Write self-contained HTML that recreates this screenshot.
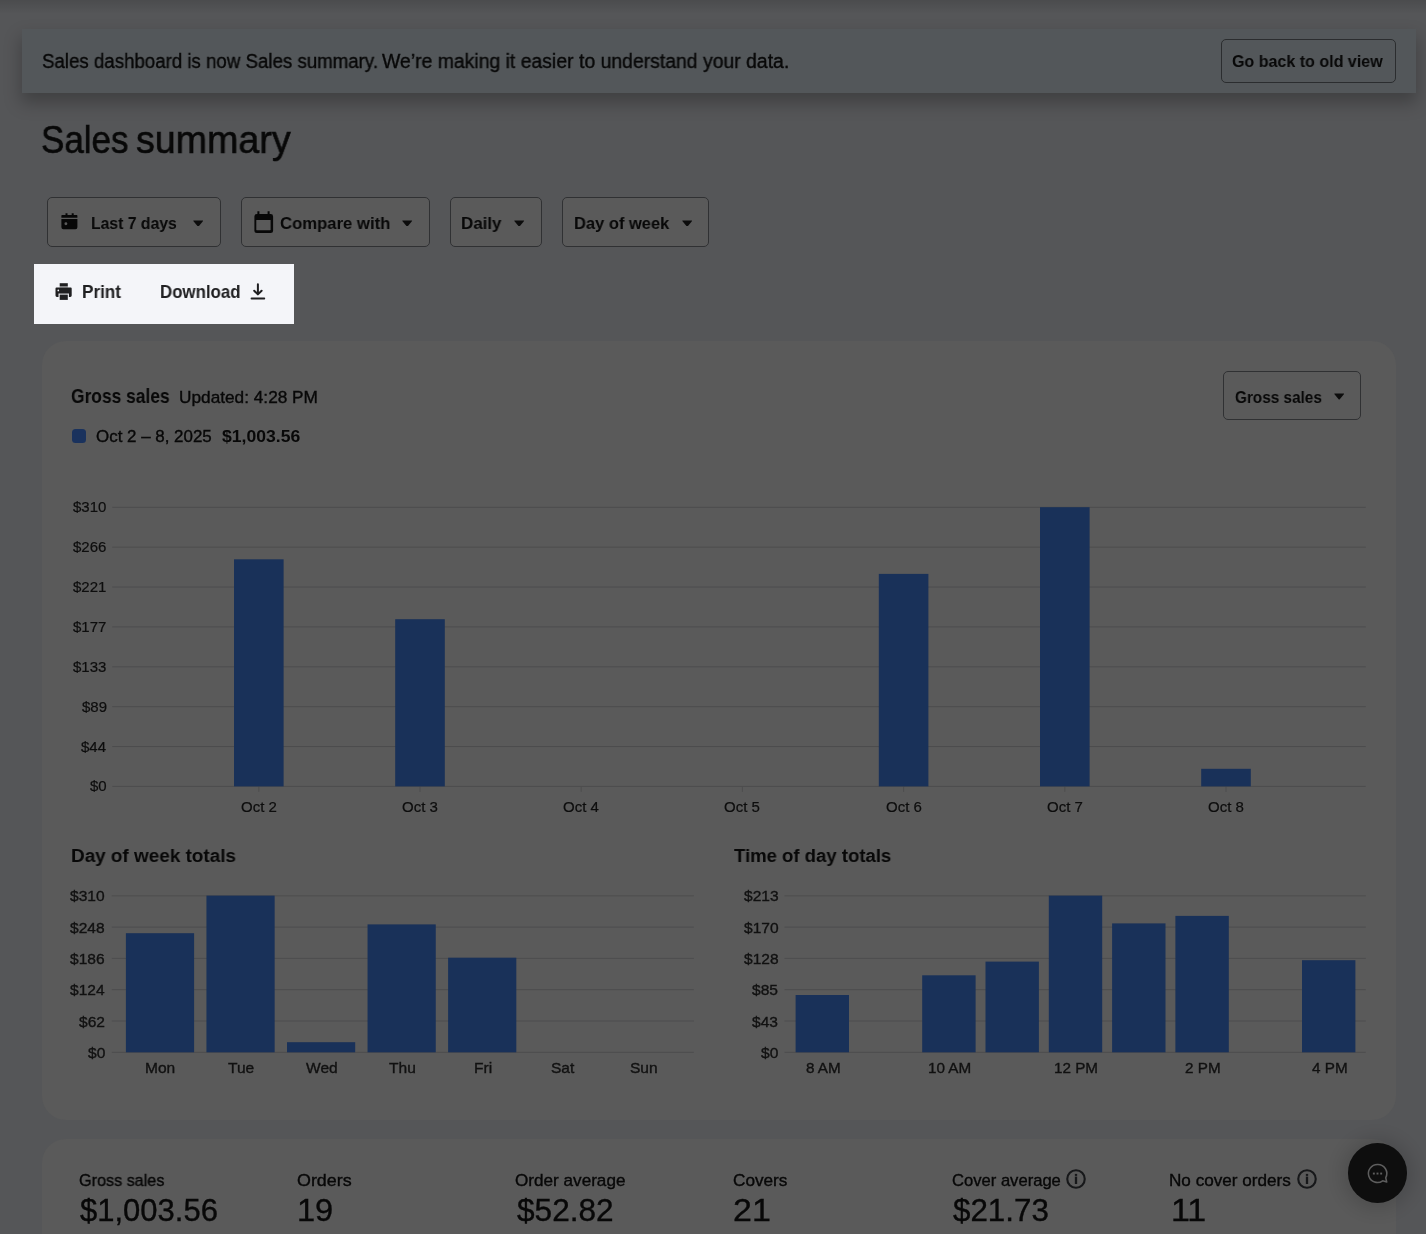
<!DOCTYPE html>
<html lang="en"><head><meta charset="utf-8"><title>Sales summary</title>
<style>
html,body{margin:0;padding:0}
body{width:1426px;height:1234px;position:relative;overflow:hidden;background:#555658;font-family:"Liberation Sans",Arial,sans-serif;color:#080808}
body>div,body>span,body>svg{position:absolute;display:block}
.t{white-space:nowrap;transform-origin:0 0;will-change:transform}
</style></head><body>
<div style="left:0;top:0;width:1426px;height:14px;background:linear-gradient(rgba(0,0,0,.12),rgba(0,0,0,0))"></div>
<div style="left:22px;top:28.5px;width:1394px;height:64.5px;background:#53575a;box-shadow:0 9px 16px 1px rgba(0,0,0,.25)"></div>
<span class="t " style="left:41.55px;top:51.93px;font-size:19.51px;line-height:19.51px;transform:scaleX(0.9578);-webkit-text-stroke:0.35px;">Sales dashboard is now Sales summary.</span>
<span class="t " style="left:381.91px;top:51.93px;font-size:19.51px;line-height:19.51px;transform:scaleX(0.9948);-webkit-text-stroke:0.35px;">We’re making it easier to understand your data.</span>
<div style="left:1220.5px;top:39px;width:175.20px;height:44.00px;background:#53575a;border:1px solid #2b2d2f;border-radius:5px;box-sizing:border-box"></div>
<span class="t " style="left:1232.34px;top:54.01px;font-size:16.81px;line-height:16.81px;transform:scaleX(0.9548);font-weight:700;">Go back to old view</span>
<span class="t " style="left:41.01px;top:119.81px;font-size:39.6px;line-height:39.6px;transform:scaleX(0.8828);-webkit-text-stroke:0.6px;">Sales</span>
<span class="t " style="left:136.25px;top:119.81px;font-size:39.6px;line-height:39.6px;transform:scaleX(0.9503);-webkit-text-stroke:0.6px;">summary</span>
<div style="left:47px;top:197.4px;width:173.60px;height:49.20px;background:#5a5a5a;border:1px solid #303133;border-radius:5px;box-sizing:border-box"></div>
<div style="left:241px;top:197.4px;width:188.80px;height:49.20px;background:#5a5a5a;border:1px solid #303133;border-radius:5px;box-sizing:border-box"></div>
<div style="left:450.2px;top:197.4px;width:91.50px;height:49.20px;background:#5a5a5a;border:1px solid #303133;border-radius:5px;box-sizing:border-box"></div>
<div style="left:562.3px;top:197.4px;width:146.70px;height:49.20px;background:#5a5a5a;border:1px solid #303133;border-radius:5px;box-sizing:border-box"></div>
<span class="t " style="left:90.65px;top:214.75px;font-size:17.24px;line-height:17.24px;transform:scaleX(0.9136);font-weight:700;">Last 7 days</span>
<span class="t " style="left:279.92px;top:214.75px;font-size:17.24px;line-height:17.24px;transform:scaleX(0.9678);font-weight:700;">Compare with</span>
<span class="t " style="left:461.47px;top:214.75px;font-size:17.24px;line-height:17.24px;transform:scaleX(0.9835);font-weight:700;">Daily</span>
<span class="t " style="left:574.0px;top:214.75px;font-size:17.24px;line-height:17.24px;transform:scaleX(0.9562);font-weight:700;">Day of week</span>
<svg style="left:193.10000000000002px;top:219.79999999999998px" width="10.4" height="6.6" viewBox="0 0 10.4 6.6"><path d="M0.6 0.4H9.8Q10.4 0.6 9.9 1.2L5.8 6.199999999999999Q5.2 6.6 4.6000000000000005 6.199999999999999L0.5 1.2Q0 0.6 0.6 0.4Z" fill="#0c0c0c"/></svg>
<svg style="left:402.3px;top:219.79999999999998px" width="10.4" height="6.6" viewBox="0 0 10.4 6.6"><path d="M0.6 0.4H9.8Q10.4 0.6 9.9 1.2L5.8 6.199999999999999Q5.2 6.6 4.6000000000000005 6.199999999999999L0.5 1.2Q0 0.6 0.6 0.4Z" fill="#0c0c0c"/></svg>
<svg style="left:514.4px;top:219.79999999999998px" width="10.4" height="6.6" viewBox="0 0 10.4 6.6"><path d="M0.6 0.4H9.8Q10.4 0.6 9.9 1.2L5.8 6.199999999999999Q5.2 6.6 4.6000000000000005 6.199999999999999L0.5 1.2Q0 0.6 0.6 0.4Z" fill="#0c0c0c"/></svg>
<svg style="left:681.6999999999999px;top:219.79999999999998px" width="10.4" height="6.6" viewBox="0 0 10.4 6.6"><path d="M0.6 0.4H9.8Q10.4 0.6 9.9 1.2L5.8 6.199999999999999Q5.2 6.6 4.6000000000000005 6.199999999999999L0.5 1.2Q0 0.6 0.6 0.4Z" fill="#0c0c0c"/></svg>
<svg style="left:60.5px;top:213px" width="17" height="17" viewBox="0 0 17 17"><path fill="#080808" fill-rule="evenodd" d="M4.5 0.2h2v1.9h4.2V0.2h2v1.9h3.1a.6 .6 0 0 1 .6 .6v2H0.4v-2a.6 .6 0 0 1 .6-.6h3.5zM0.4 6.1h16v8.2a2 2 0 0 1-2 2H2.4a2 2 0 0 1-2-2zM4.9 9.3a1.45 1.45 0 1 0 0 2.9a1.45 1.45 0 1 0 0-2.9z"/></svg>
<svg style="left:253.6px;top:210.8px" width="20" height="23" viewBox="0 0 20 23"><path fill="#080808" fill-rule="evenodd" d="M3.4 0.2h2v2.9h8.2V0.2h2v2.9h1.1a2.4 2.4 0 0 1 2.4 2.4v14.2a2.4 2.4 0 0 1-2.4 2.4H2.8a2.4 2.4 0 0 1-2.4-2.4V5.5a2.4 2.4 0 0 1 2.4-2.4h.6zM2.3 9.1v9.7a.4 .4 0 0 0 .4 .4h13.5a.4 .4 0 0 0 .4-.4V9.1z"/></svg>
<div style="left:34px;top:264px;width:260.2px;height:60px;background:#f4f5f9;"></div>
<span class="t " style="left:81.75px;top:284.26px;font-size:17.52px;line-height:17.52px;transform:scaleX(0.9787);font-weight:700;color:#202022;">Print</span>
<span class="t " style="left:159.87px;top:284.26px;font-size:17.52px;line-height:17.52px;transform:scaleX(0.9622);font-weight:700;color:#202022;">Download</span>
<svg style="left:55.4px;top:283px" width="17" height="17" viewBox="0 0 17 17"><path fill="#1f1f21" d="M4.7 0.2h8.1v3H4.7z"/><path fill="#1f1f21" opacity=".5" d="M4.7 3.2h8.1v1.3H4.7z"/><path fill="#1f1f21" fill-rule="evenodd" d="M1.5 4.4h14.2a1 1 0 0 1 1 1v7.2a1.4 1.4 0 0 1-1.4 1.4H13.9V10.6H3.5V14H1.9a1.4 1.4 0 0 1-1.4-1.4V5.4a1 1 0 0 1 1-1zM3.3 6.6a.85 .85 0 1 0 0 1.7a.85 .85 0 1 0 0-1.7z"/><path fill="#1f1f21" opacity=".4" d="M4.7 10.6h8.1v1.4H4.7z"/><path fill="#1f1f21" d="M4.7 12h8.1v4.9H4.7z"/></svg>
<svg style="left:249.6px;top:283px" width="16" height="17" viewBox="0 0 16 17"><path fill="none" stroke="#1f1f21" stroke-width="2" stroke-linecap="round" stroke-linejoin="round" d="M7.9 1.3v9.8M4.2 7.7L7.9 11.4l3.7-3.7"/><path fill="none" stroke="#1f1f21" stroke-width="1.8" stroke-linecap="round" d="M1.5 15.5h12.8"/></svg>
<div style="left:41.7px;top:341px;width:1354px;height:778.6px;background:#5a5a5a;border-radius:24px"></div>
<span class="t " style="left:71.49px;top:387.08px;font-size:19.8px;line-height:19.8px;transform:scaleX(0.8784);font-weight:700;">Gross sales</span>
<span class="t " style="left:179.47px;top:388.58px;font-size:16.38px;line-height:16.38px;transform:scaleX(1.0539);-webkit-text-stroke:0.35px;">Updated: 4:28 PM</span>
<div style="left:71.8px;top:429px;width:14.3px;height:14.2px;background:#1a325d;border-radius:3.5px"></div>
<span class="t " style="left:96.1px;top:428.96px;font-size:16.52px;line-height:16.52px;transform:scaleX(1.0252);-webkit-text-stroke:0.35px;">Oct 2 – 8, 2025</span>
<span class="t " style="left:222.37px;top:428.96px;font-size:16.52px;line-height:16.52px;transform:scaleX(1.065);font-weight:700;">$1,003.56</span>
<div style="left:1223.1px;top:371.1px;width:137.80px;height:49.10px;background:#5a5a5a;border:1px solid #303133;border-radius:5px;box-sizing:border-box"></div>
<span class="t " style="left:1234.87px;top:388.55px;font-size:17.24px;line-height:17.24px;transform:scaleX(0.8885);font-weight:700;">Gross sales</span>
<svg style="left:1333.8px;top:393.4px" width="10.4" height="6.6" viewBox="0 0 10.4 6.6"><path d="M0.6 0.4H9.8Q10.4 0.6 9.9 1.2L5.8 6.199999999999999Q5.2 6.6 4.6000000000000005 6.199999999999999L0.5 1.2Q0 0.6 0.6 0.4Z" fill="#0c0c0c"/></svg>
<span class="t " style="left:73.12px;top:499.34px;font-size:15.0px;line-height:15.0px;transform:scaleX(0.9999);-webkit-text-stroke:0.2px;color:#0d0d0d;">$310</span>
<span class="t " style="left:73.19px;top:539.21px;font-size:15.0px;line-height:15.0px;transform:scaleX(0.9999);-webkit-text-stroke:0.2px;color:#0d0d0d;">$266</span>
<span class="t " style="left:73.26px;top:579.08px;font-size:15.0px;line-height:15.0px;transform:scaleX(0.9999);-webkit-text-stroke:0.2px;color:#0d0d0d;">$221</span>
<span class="t " style="left:73.29px;top:618.95px;font-size:15.0px;line-height:15.0px;transform:scaleX(0.9999);-webkit-text-stroke:0.2px;color:#0d0d0d;">$177</span>
<span class="t " style="left:73.19px;top:658.82px;font-size:15.0px;line-height:15.0px;transform:scaleX(0.9999);-webkit-text-stroke:0.2px;color:#0d0d0d;">$133</span>
<span class="t " style="left:81.58px;top:698.69px;font-size:15.0px;line-height:15.0px;transform:scaleX(0.9999);-webkit-text-stroke:0.2px;color:#0d0d0d;">$89</span>
<span class="t " style="left:81.31px;top:738.56px;font-size:15.0px;line-height:15.0px;transform:scaleX(0.9999);-webkit-text-stroke:0.2px;color:#0d0d0d;">$44</span>
<span class="t " style="left:89.8px;top:778.43px;font-size:15.0px;line-height:15.0px;transform:scaleX(0.9999);-webkit-text-stroke:0.2px;color:#0d0d0d;">$0</span>
<span class="t " style="left:240.9px;top:798.94px;font-size:15.0px;line-height:15.0px;transform:scaleX(0.9999);-webkit-text-stroke:0.2px;color:#0d0d0d;">Oct 2</span>
<span class="t " style="left:402.05px;top:798.94px;font-size:15.0px;line-height:15.0px;transform:scaleX(0.9999);-webkit-text-stroke:0.2px;color:#0d0d0d;">Oct 3</span>
<span class="t " style="left:563.14px;top:798.94px;font-size:15.0px;line-height:15.0px;transform:scaleX(0.9999);-webkit-text-stroke:0.2px;color:#0d0d0d;">Oct 4</span>
<span class="t " style="left:724.44px;top:798.94px;font-size:15.0px;line-height:15.0px;transform:scaleX(0.9999);-webkit-text-stroke:0.2px;color:#0d0d0d;">Oct 5</span>
<span class="t " style="left:885.65px;top:798.94px;font-size:15.0px;line-height:15.0px;transform:scaleX(0.9999);-webkit-text-stroke:0.2px;color:#0d0d0d;">Oct 6</span>
<span class="t " style="left:1046.9px;top:798.94px;font-size:15.0px;line-height:15.0px;transform:scaleX(0.9999);-webkit-text-stroke:0.2px;color:#0d0d0d;">Oct 7</span>
<span class="t " style="left:1208.05px;top:798.94px;font-size:15.0px;line-height:15.0px;transform:scaleX(0.9999);-webkit-text-stroke:0.2px;color:#0d0d0d;">Oct 8</span>
<span class="t " style="left:70.3px;top:889.41px;font-size:14.81px;line-height:14.81px;transform:scaleX(1.0503);-webkit-text-stroke:0.35px;color:#111;">$310</span>
<span class="t " style="left:70.37px;top:920.71px;font-size:14.81px;line-height:14.81px;transform:scaleX(1.0503);-webkit-text-stroke:0.35px;color:#111;">$248</span>
<span class="t " style="left:70.38px;top:952.01px;font-size:14.81px;line-height:14.81px;transform:scaleX(1.0503);-webkit-text-stroke:0.35px;color:#111;">$186</span>
<span class="t " style="left:70.15px;top:983.31px;font-size:14.81px;line-height:14.81px;transform:scaleX(1.0503);-webkit-text-stroke:0.35px;color:#111;">$124</span>
<span class="t " style="left:79.13px;top:1014.61px;font-size:14.81px;line-height:14.81px;transform:scaleX(1.0503);-webkit-text-stroke:0.35px;color:#111;">$62</span>
<span class="t " style="left:87.61px;top:1045.91px;font-size:14.81px;line-height:14.81px;transform:scaleX(1.0503);-webkit-text-stroke:0.35px;color:#111;">$0</span>
<span class="t " style="left:145.44px;top:1060.61px;font-size:14.81px;line-height:14.81px;transform:scaleX(1.0503);-webkit-text-stroke:0.35px;color:#111;">Mon</span>
<span class="t " style="left:228.31px;top:1060.61px;font-size:14.81px;line-height:14.81px;transform:scaleX(1.0503);-webkit-text-stroke:0.35px;color:#111;">Tue</span>
<span class="t " style="left:306.42px;top:1060.61px;font-size:14.81px;line-height:14.81px;transform:scaleX(1.0503);-webkit-text-stroke:0.35px;color:#111;">Wed</span>
<span class="t " style="left:389.29px;top:1060.61px;font-size:14.81px;line-height:14.81px;transform:scaleX(1.0503);-webkit-text-stroke:0.35px;color:#111;">Thu</span>
<span class="t " style="left:473.72px;top:1060.61px;font-size:14.81px;line-height:14.81px;transform:scaleX(1.0503);-webkit-text-stroke:0.35px;color:#111;">Fri</span>
<span class="t " style="left:551.48px;top:1060.61px;font-size:14.81px;line-height:14.81px;transform:scaleX(1.0503);-webkit-text-stroke:0.35px;color:#111;">Sat</span>
<span class="t " style="left:630.31px;top:1060.61px;font-size:14.81px;line-height:14.81px;transform:scaleX(1.0503);-webkit-text-stroke:0.35px;color:#111;">Sun</span>
<span class="t " style="left:743.78px;top:889.41px;font-size:14.81px;line-height:14.81px;transform:scaleX(1.0503);-webkit-text-stroke:0.35px;color:#111;">$213</span>
<span class="t " style="left:743.7px;top:920.71px;font-size:14.81px;line-height:14.81px;transform:scaleX(1.0503);-webkit-text-stroke:0.35px;color:#111;">$170</span>
<span class="t " style="left:743.77px;top:952.01px;font-size:14.81px;line-height:14.81px;transform:scaleX(1.0503);-webkit-text-stroke:0.35px;color:#111;">$128</span>
<span class="t " style="left:752.4px;top:983.31px;font-size:14.81px;line-height:14.81px;transform:scaleX(1.0503);-webkit-text-stroke:0.35px;color:#111;">$85</span>
<span class="t " style="left:752.43px;top:1014.61px;font-size:14.81px;line-height:14.81px;transform:scaleX(1.0503);-webkit-text-stroke:0.35px;color:#111;">$43</span>
<span class="t " style="left:761.01px;top:1045.91px;font-size:14.81px;line-height:14.81px;transform:scaleX(1.0503);-webkit-text-stroke:0.35px;color:#111;">$0</span>
<span class="t " style="left:805.51px;top:1060.61px;font-size:14.81px;line-height:14.81px;transform:scaleX(1.0303);-webkit-text-stroke:0.35px;color:#111;">8 AM</span>
<span class="t " style="left:927.62px;top:1060.61px;font-size:14.81px;line-height:14.81px;transform:scaleX(1.0303);-webkit-text-stroke:0.35px;color:#111;">10 AM</span>
<span class="t " style="left:1053.8px;top:1060.61px;font-size:14.81px;line-height:14.81px;transform:scaleX(1.0303);-webkit-text-stroke:0.35px;color:#111;">12 PM</span>
<span class="t " style="left:1184.84px;top:1060.61px;font-size:14.81px;line-height:14.81px;transform:scaleX(1.0303);-webkit-text-stroke:0.35px;color:#111;">2 PM</span>
<span class="t " style="left:1311.64px;top:1060.61px;font-size:14.81px;line-height:14.81px;transform:scaleX(1.0303);-webkit-text-stroke:0.35px;color:#111;">4 PM</span>
<svg style="left:0;top:0" width="1426" height="1234" viewBox="0 0 1426 1234"><rect x="112.2" y="506.80" width="1253.60" height="1" fill="#4d4d4e"/><rect x="112.2" y="546.67" width="1253.60" height="1" fill="#4d4d4e"/><rect x="112.2" y="586.54" width="1253.60" height="1" fill="#4d4d4e"/><rect x="112.2" y="626.41" width="1253.60" height="1" fill="#4d4d4e"/><rect x="112.2" y="666.28" width="1253.60" height="1" fill="#4d4d4e"/><rect x="112.2" y="706.15" width="1253.60" height="1" fill="#4d4d4e"/><rect x="112.2" y="746.02" width="1253.60" height="1" fill="#4d4d4e"/><rect x="112.2" y="785.89" width="1253.60" height="1" fill="#4d4d4e"/><rect x="258.30" y="786.39" width="1" height="5.5" fill="#4d4d4e"/><rect x="234.00" y="559.30" width="49.60" height="227.09" fill="#193159"/><rect x="419.50" y="786.39" width="1" height="5.5" fill="#4d4d4e"/><rect x="395.20" y="619.20" width="49.60" height="167.19" fill="#193159"/><rect x="580.70" y="786.39" width="1" height="5.5" fill="#4d4d4e"/><rect x="741.90" y="786.39" width="1" height="5.5" fill="#4d4d4e"/><rect x="903.10" y="786.39" width="1" height="5.5" fill="#4d4d4e"/><rect x="878.80" y="573.90" width="49.60" height="212.49" fill="#193159"/><rect x="1064.30" y="786.39" width="1" height="5.5" fill="#4d4d4e"/><rect x="1040.00" y="507.20" width="49.60" height="279.19" fill="#193159"/><rect x="1225.50" y="786.39" width="1" height="5.5" fill="#4d4d4e"/><rect x="1201.20" y="768.80" width="49.60" height="17.59" fill="#193159"/><rect x="111.8" y="895.30" width="582.10" height="1" fill="#4d4d4e"/><rect x="111.8" y="926.60" width="582.10" height="1" fill="#4d4d4e"/><rect x="111.8" y="957.90" width="582.10" height="1" fill="#4d4d4e"/><rect x="111.8" y="989.20" width="582.10" height="1" fill="#4d4d4e"/><rect x="111.8" y="1020.50" width="582.10" height="1" fill="#4d4d4e"/><rect x="111.8" y="1051.80" width="582.10" height="1" fill="#4d4d4e"/><rect x="125.90" y="933.20" width="68.20" height="119.10" fill="#193159"/><rect x="206.45" y="895.60" width="68.20" height="156.70" fill="#193159"/><rect x="287.00" y="1042.20" width="68.20" height="10.10" fill="#193159"/><rect x="367.55" y="924.40" width="68.20" height="127.90" fill="#193159"/><rect x="448.10" y="957.70" width="68.20" height="94.60" fill="#193159"/><rect x="784.5" y="895.30" width="581.30" height="1" fill="#4d4d4e"/><rect x="784.5" y="926.60" width="581.30" height="1" fill="#4d4d4e"/><rect x="784.5" y="957.90" width="581.30" height="1" fill="#4d4d4e"/><rect x="784.5" y="989.20" width="581.30" height="1" fill="#4d4d4e"/><rect x="784.5" y="1020.50" width="581.30" height="1" fill="#4d4d4e"/><rect x="784.5" y="1051.80" width="581.30" height="1" fill="#4d4d4e"/><rect x="795.60" y="995.00" width="53.40" height="57.30" fill="#193159"/><rect x="922.20" y="975.30" width="53.40" height="77.00" fill="#193159"/><rect x="985.50" y="961.60" width="53.40" height="90.70" fill="#193159"/><rect x="1048.80" y="895.60" width="53.40" height="156.70" fill="#193159"/><rect x="1112.10" y="923.40" width="53.40" height="128.90" fill="#193159"/><rect x="1175.40" y="915.90" width="53.40" height="136.40" fill="#193159"/><rect x="1302.00" y="960.20" width="53.40" height="92.10" fill="#193159"/></svg>
<span class="t " style="left:70.93px;top:846.16px;font-size:19.23px;line-height:19.23px;transform:scaleX(0.9837);font-weight:700;">Day of week totals</span>
<span class="t " style="left:733.89px;top:846.16px;font-size:19.23px;line-height:19.23px;transform:scaleX(0.9646);font-weight:700;">Time of day totals</span>
<div style="left:41.7px;top:1139.3px;width:1354px;height:140px;background:#5a5a5a;border-radius:24px"></div>
<span class="t " style="left:78.79px;top:1172.48px;font-size:16.38px;line-height:16.38px;transform:scaleX(0.9887);-webkit-text-stroke:0.35px;">Gross sales</span>
<span class="t " style="left:80.37px;top:1195.41px;font-size:30.63px;line-height:30.63px;transform:scaleX(1.012);-webkit-text-stroke:0.35px;">$1,003.56</span>
<span class="t " style="left:296.95px;top:1172.48px;font-size:16.38px;line-height:16.38px;transform:scaleX(1.0926);-webkit-text-stroke:0.35px;">Orders</span>
<span class="t " style="left:297.32px;top:1195.41px;font-size:30.63px;line-height:30.63px;transform:scaleX(1.0632);-webkit-text-stroke:0.35px;">19</span>
<span class="t " style="left:515.19px;top:1172.48px;font-size:16.38px;line-height:16.38px;transform:scaleX(1.047);-webkit-text-stroke:0.35px;">Order average</span>
<span class="t " style="left:516.76px;top:1195.41px;font-size:30.63px;line-height:30.63px;transform:scaleX(1.0314);-webkit-text-stroke:0.35px;">$52.82</span>
<span class="t " style="left:733.33px;top:1172.48px;font-size:16.38px;line-height:16.38px;transform:scaleX(1.0503);-webkit-text-stroke:0.35px;">Covers</span>
<span class="t " style="left:733.19px;top:1195.41px;font-size:30.63px;line-height:30.63px;transform:scaleX(1.1085);-webkit-text-stroke:0.35px;">21</span>
<span class="t " style="left:951.56px;top:1172.48px;font-size:16.38px;line-height:16.38px;transform:scaleX(1.0144);-webkit-text-stroke:0.35px;">Cover average</span>
<span class="t " style="left:953.16px;top:1195.41px;font-size:30.63px;line-height:30.63px;transform:scaleX(1.0227);-webkit-text-stroke:0.35px;">$21.73</span>
<span class="t " style="left:1169.19px;top:1172.48px;font-size:16.38px;line-height:16.38px;transform:scaleX(1.0464);-webkit-text-stroke:0.35px;">No cover orders</span>
<span class="t " style="left:1171.01px;top:1195.41px;font-size:30.63px;line-height:30.63px;transform:scaleX(1.1084);-webkit-text-stroke:0.35px;">11</span>
<svg style="left:1065.0px;top:1168.3px" width="22" height="22" viewBox="0 0 22 22"><circle cx="11" cy="11" r="8.75" fill="none" stroke="#17181a" stroke-width="2.1"/><rect x="9.85" y="8.6" width="2.3" height="7.4" fill="#17181a"/><rect x="9.85" y="5.9" width="2.3" height="2" fill="#17181a"/></svg>
<svg style="left:1295.5px;top:1168.3px" width="22" height="22" viewBox="0 0 22 22"><circle cx="11" cy="11" r="8.75" fill="none" stroke="#17181a" stroke-width="2.1"/><rect x="9.85" y="8.6" width="2.3" height="7.4" fill="#17181a"/><rect x="9.85" y="5.9" width="2.3" height="2" fill="#17181a"/></svg>
<div style="left:1347.7px;top:1143.2px;width:59.6px;height:59.6px;border-radius:50%;background:#0e0e0e;box-shadow:0 1px 16px 7px rgba(0,0,0,.12)"></div>
<svg style="left:1363.9px;top:1160.2px" width="27" height="27" viewBox="0 0 24 24"><path fill="none" stroke="#5e5e5e" stroke-width="1.35" stroke-linejoin="round" d="M12 4a8 8 0 1 0 4.6 14.5l3.6 1-.9-3.7A8 8 0 0 0 12 4z"/><rect x="7.9" y="11.2" width="1.7" height="1.7" fill="#5e5e5e"/><rect x="11.15" y="11.2" width="1.7" height="1.7" fill="#5e5e5e"/><rect x="14.4" y="11.2" width="1.7" height="1.7" fill="#5e5e5e"/></svg>
</body></html>
